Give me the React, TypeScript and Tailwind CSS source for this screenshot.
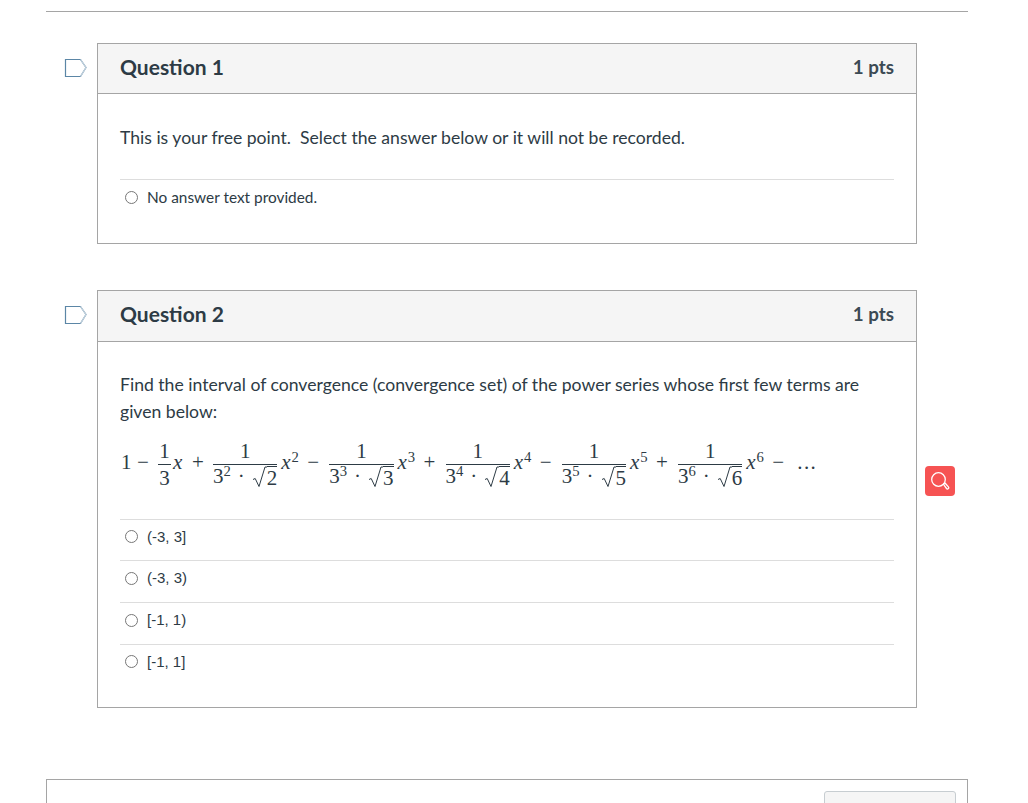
const serif = "font-['Liberation_Serif',serif]";

function Flag() {
  return (
    <svg className="absolute left-[-34px] top-[14px]" width="24" height="20" viewBox="0 0 24 20" fill="none">
      <path d="M1.5 1.5H16.5L22 9.5L16.5 18.5H1.5Z" fill="#fff" stroke="#5b86a6" strokeWidth="1.2" />
      <path d="M16.5 1.5L22 9.5L16.5 18.5" stroke="#c4d3de" strokeWidth="1.2" />
    </svg>
  );
}

function Answer({ text, sans }: { text: string; sans?: boolean }) {
  return (
    <div className="flex h-[41.67px] items-center border-t border-[#dddddd] pb-[6px]">
      <span className="ml-[5px] h-[13px] w-[13px] rounded-full border border-[#777777] bg-white" />
      <span className={`ml-[9px] text-[#2d3b45] ${sans ? "font-['Liberation_Sans',sans-serif] text-[15px]" : "text-[15.4px]"}`}>
        {text}
      </span>
    </div>
  );
}

function Radical({ n }: { n: number }) {
  return (
    <span className="inline-flex items-start">
      <svg width="15" height="22" viewBox="0 0 15 22" fill="none" stroke="#2d3b45">
        <path d="M1 13.5L3.2 12.5L7 20.5L13 1H15" strokeWidth="1" />
      </svg>
      <span className="h-[22px] border-t border-[#2d3b45] leading-[22px]">{n}</span>
    </span>
  );
}

function Frac({ n, pow }: { n: number; pow: number }) {
  return (
    <span className="flex w-[64.25px] flex-col items-center">
      <span className="h-[24px] w-full border-b border-[#2d3b45] text-center leading-[20px]">1</span>
      <span className="flex h-[24px] items-center justify-end self-end whitespace-nowrap">
        <span>
          3<sup className="text-[14.7px]">{pow}</sup>
        </span>
        <span className="mx-[7px]">·</span>
        <Radical n={n} />
      </span>
    </span>
  );
}

function XPow({ pow }: { pow: number }) {
  return (
    <span className="ml-[4px] mb-[4px] w-[26px]">
      <span className="italic">x</span>
      <sup className="ml-[1px] text-[14.7px]">{pow}</sup>
    </span>
  );
}

function Question({ title, tall, children }: { title: string; tall?: boolean; children: React.ReactNode }) {
  return (
    <section className="relative ml-[97px] w-[820px] border border-[#a5a5a5] bg-white">
      <Flag />
      <header className={`flex items-center justify-between border-b border-[#a5a5a5] bg-[#f5f5f5] px-[22px] text-[#2d3b45] ${tall ? "h-[51px]" : "h-[50px]"}`}>
        <h2 className="pb-[3px] text-[21px] font-bold">{title}</h2>
        <span className="pb-[3px] text-[18.8px] font-bold text-[#3c4a54]">1 pts</span>
      </header>
      <div className="px-[22px]">{children}</div>
    </section>
  );
}

export default function App() {
  return (
    <div className="relative h-[803px] w-[1028px] overflow-hidden bg-white font-['Lato',sans-serif] text-[#2d3b45]">
      <div className="mx-[46px] mt-[11px] w-[922px] border-t border-[#a5a5a5]" />

      <div className="mt-[31px] flex flex-col gap-[46px]">
        <Question title="Question 1">
          <p className="mt-[32px] text-[17.6px] leading-[24px]">
            This is your free point.&nbsp; Select the answer below or it will not be recorded.
          </p>
          <div className="mt-[29px] pb-[22px]">
            <Answer text="No answer text provided." />
          </div>
        </Question>

        <Question title="Question 2" tall>
          <p className="mt-[29px] text-[17.6px] leading-[27px]">
            Find the interval of convergence (convergence set) of the power series whose first few terms are given below:
          </p>
          <div className={`mt-[10px] flex h-[60px] items-center text-[21px] ${serif}`}>
            <span className="ml-[1px] mb-[4px] w-[10.5px]">1</span>
            <span className="ml-[5.5px] mb-[4px] w-[21px]">−</span>
            <span className="flex w-[13px] flex-col items-center">
              <span className="h-[24px] w-full border-b border-[#2d3b45] text-center leading-[20px]">1</span>
              <span className="h-[24px] leading-[26px]">3</span>
            </span>
            <span className="ml-[2px] mb-[4px] w-[19px] italic">x</span>
            <span className="mb-[4px] w-[21px]">+</span>
            <Frac n={2} pow={2} />
            <XPow pow={2} />
            <span className="mb-[4px] w-[22px]">−</span>
            <Frac n={3} pow={3} />
            <XPow pow={3} />
            <span className="mb-[4px] w-[22px]">+</span>
            <Frac n={4} pow={4} />
            <XPow pow={4} />
            <span className="mb-[4px] w-[22px]">−</span>
            <Frac n={5} pow={5} />
            <XPow pow={5} />
            <span className="mb-[4px] w-[22px]">+</span>
            <Frac n={6} pow={6} />
            <XPow pow={6} />
            <span className="mb-[4px] w-[25px]">−</span>
            <span className="mb-[4px] tracking-[1.4px]">...</span>
          </div>
          <div className="mt-[24px] pb-[22px]">
            <Answer sans text="(-3, 3]" />
            <Answer sans text="(-3, 3)" />
            <Answer sans text="[-1, 1)" />
            <Answer sans text="[-1, 1]" />
          </div>
        </Question>
      </div>

      <button className="absolute left-[925px] top-[466px] flex h-[30px] w-[30px] items-center justify-center rounded-[4px] bg-[#f65353]">
        <svg width="20" height="20" viewBox="0 0 20 20" fill="none" stroke="#ffffff" strokeWidth="1.3">
          <circle cx="8.5" cy="8.5" r="6.8" />
          <path d="M13.5 13.3L15.2 12.2L18.4 15.8C18.9 16.4 18.9 17 18.3 17.6C17.7 18.2 17 18.1 16.5 17.5Z" />
        </svg>
      </button>

      <div className="mx-[46px] mt-[71px] h-[60px] w-[922px] border border-[#a5a5a5] pl-[777px] pt-[11px]">
        <div className="h-[40px] w-[132px] rounded-[3px] border border-[#c7cdd1] bg-[#f5f5f5]" />
      </div>
    </div>
  );
}
